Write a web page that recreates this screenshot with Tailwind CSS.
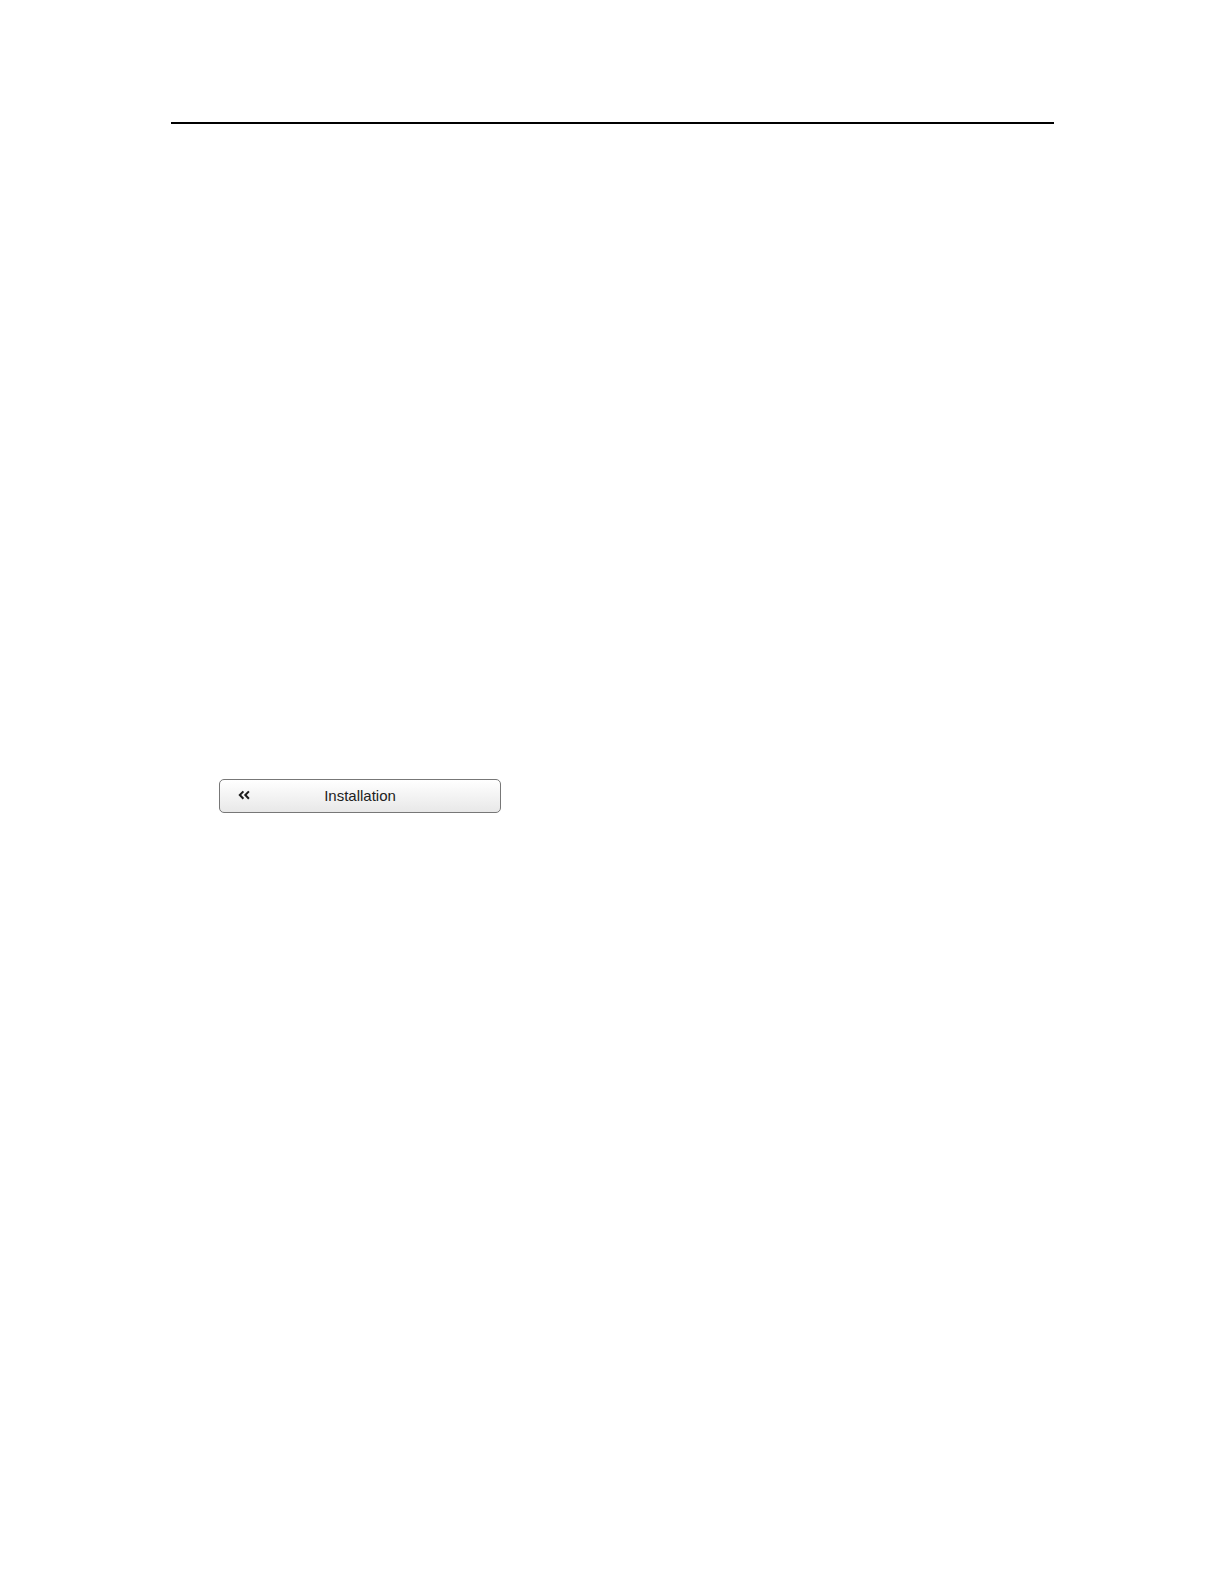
<!DOCTYPE html>
<html lang="en">
<head>
  <meta charset="UTF-8" />
  <meta name="viewport" content="width=device-width, initial-scale=1.0"/>
  <title>Installation</title>
  <script src="https://cdn.jsdelivr.net/npm/@tailwindcss/browser@4"></script>
</head>
<body class="min-h-screen bg-white font-['Liberation_Sans',Arial,sans-serif] text-[#222]">
  <main class="pt-[122px] pl-[171px] pr-[170px]">
    <hr class="border-0 h-[2px] bg-black"/>

    <div class="pt-[655px] pl-12">
      <button type="button" class="grid grid-cols-[12px_1fr_12px] items-center w-full max-w-[282px] h-[34px] px-[18px] rounded-[5px] border border-[#777] bg-linear-to-b from-white to-[#e8e8e8] text-[15px] leading-5">
        <!-- back chevrons -->
        <svg class="w-3 h-3" viewBox="0 0 12 12" fill="none" stroke="#1c1c1c" stroke-width="2" aria-hidden="true">
          <path d="M5.4 1.4 1.8 5 5.4 8.8"/>
          <path d="M10.9 1.4 7.3 5 10.9 8.8"/>
        </svg>
        <span class="text-center">Installation</span>
      </button>
    </div>
  </main>
</body>
</html>
